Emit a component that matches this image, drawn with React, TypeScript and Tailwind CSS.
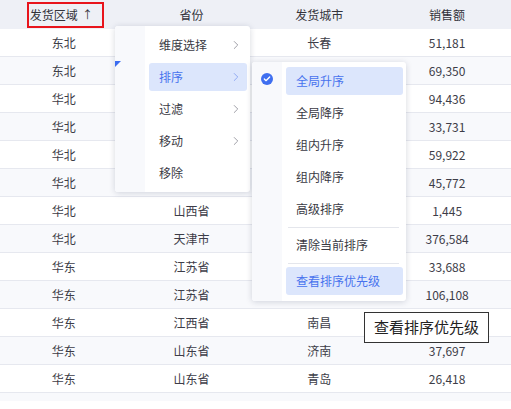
import { ChevronRight, Check } from 'lucide-react';

const rows: [string, string, string, string][] = [
  ['东北', '吉林省', '长春', '51,181'],
  ['东北', '辽宁省', '沈阳', '69,350'],
  ['华北', '北京市', '北京', '94,436'],
  ['华北', '河北省', '石家庄', '33,731'],
  ['华北', '河北省', '唐山', '59,922'],
  ['华北', '内蒙古', '呼和浩特', '45,772'],
  ['华北', '山西省', '太原', '1,445'],
  ['华北', '天津市', '天津', '376,584'],
  ['华东', '江苏省', '南京', '33,688'],
  ['华东', '江苏省', '苏州', '106,108'],
  ['华东', '江西省', '南昌', '28,340'],
  ['华东', '山东省', '济南', '37,697'],
  ['华东', '山东省', '青岛', '26,418'],
  ['华东', '山东省', '烟台', '18,245'],
];

const mainMenu = [
  { label: '维度选择', sub: true },
  { label: '排序', sub: true, active: true },
  { label: '过滤', sub: true },
  { label: '移动', sub: true },
  { label: '移除', sub: false },
];

function MenuItem({ label, active, sub }: { label: string; active?: boolean; sub?: boolean }) {
  return (
    <div className="h-[32px] py-[2px] pl-[4px] pr-[3px]">
      <div
        className={`h-full rounded-[3px] flex items-center pl-[10px] pr-[4px] ${
          active ? 'bg-[#dce6fc] text-[#4873ee]' : 'text-[#3a3a44]'
        }`}
      >
        <span className="flex-1">{label}</span>
        {sub && (
          <ChevronRight
            className={`h-[14px] w-[14px] ${active ? 'text-[#7f9cf0]' : 'text-[#8a8a94]'}`}
            strokeWidth={1.4}
          />
        )}
      </div>
    </div>
  );
}

function Separator() {
  return (
    <div className="h-[4px] flex items-center pl-[6px] pr-[7px]">
      <div className="h-px w-full bg-[#e4e6ec]" />
    </div>
  );
}

export default function App() {
  return (
    <div
      className="relative w-[511px] h-[409px] bg-white overflow-hidden text-[12px]"
      style={{ fontFamily: '"Noto Sans CJK SC", "Noto Sans", sans-serif' }}
    >
      <div className="h-[401px] overflow-hidden">
        {/* header */}
        <div className="grid grid-cols-4 h-[29px] bg-[#eef0f6] text-[#33333b]">
          <div className="flex items-center justify-center">
            <span className="inline-flex items-center h-[26px] pl-[1px] pr-[9px] ml-[3px] border-2 border-[#e8141c] gap-[4px]">
              发货区域<span className="text-[11px]">↑</span>
            </span>
          </div>
          <div className="flex items-center justify-center">省份</div>
          <div className="flex items-center justify-center">发货城市</div>
          <div className="flex items-center justify-center">销售额</div>
        </div>
        {rows.map((r, i) => (
          <div
            key={i}
            className={`grid grid-cols-4 h-[28px] border-b border-[#e6e8ef] text-[#3d3d48] ${
              i % 2 === 1 ? 'bg-[#f8f9fc]' : 'bg-white'
            }`}
          >
            {r.map((c, j) => (
              <div key={j} className="flex items-center justify-center">
                {c}
              </div>
            ))}
          </div>
        ))}
      </div>

      {/* main context menu */}
      <div className="absolute left-[115px] top-[26px] w-[135px] h-[166px] bg-white rounded-[3px] shadow-[0_1px_6px_rgba(30,40,70,0.18)] flex overflow-hidden">
        <div className="w-[30px] bg-[#f8f9fc]" />
        <div className="flex-1 py-[3px]">
          {mainMenu.map((m) => (
            <MenuItem key={m.label} label={m.label} sub={m.sub} active={m.active} />
          ))}
        </div>
      </div>
      <div className="absolute left-[115px] top-[61px] w-0 h-0 border-t-[6px] border-r-[6px] border-t-[#3b6cf0] border-r-transparent" />

      {/* sort submenu */}
      <div className="absolute left-[252px] top-[62px] w-[154px] h-[239px] bg-white rounded-[3px] shadow-[0_1px_6px_rgba(30,40,70,0.18)] flex overflow-hidden">
        <div className="w-[30px] bg-[#f8f9fc] pt-[11px] flex justify-center">
          <span className="w-[12px] h-[12px] rounded-full bg-[#3f6ff0] flex items-center justify-center">
            <Check className="w-[8px] h-[8px] text-white" strokeWidth={4} />
          </span>
        </div>
        <div className="flex-1 pt-[3px]">
          <MenuItem label="全局升序" active />
          <MenuItem label="全局降序" />
          <MenuItem label="组内升序" />
          <MenuItem label="组内降序" />
          <MenuItem label="高级排序" />
          <Separator />
          <MenuItem label="清除当前排序" />
          <Separator />
          <MenuItem label="查看排序优先级" active />
        </div>
      </div>

      {/* tooltip */}
      <div className="absolute left-[364px] top-[312px] w-[125px] h-[31px] bg-white border border-[#333] flex items-center pl-[9px] text-[15px] text-[#222]">
        查看排序优先级
      </div>
    </div>
  );
}
